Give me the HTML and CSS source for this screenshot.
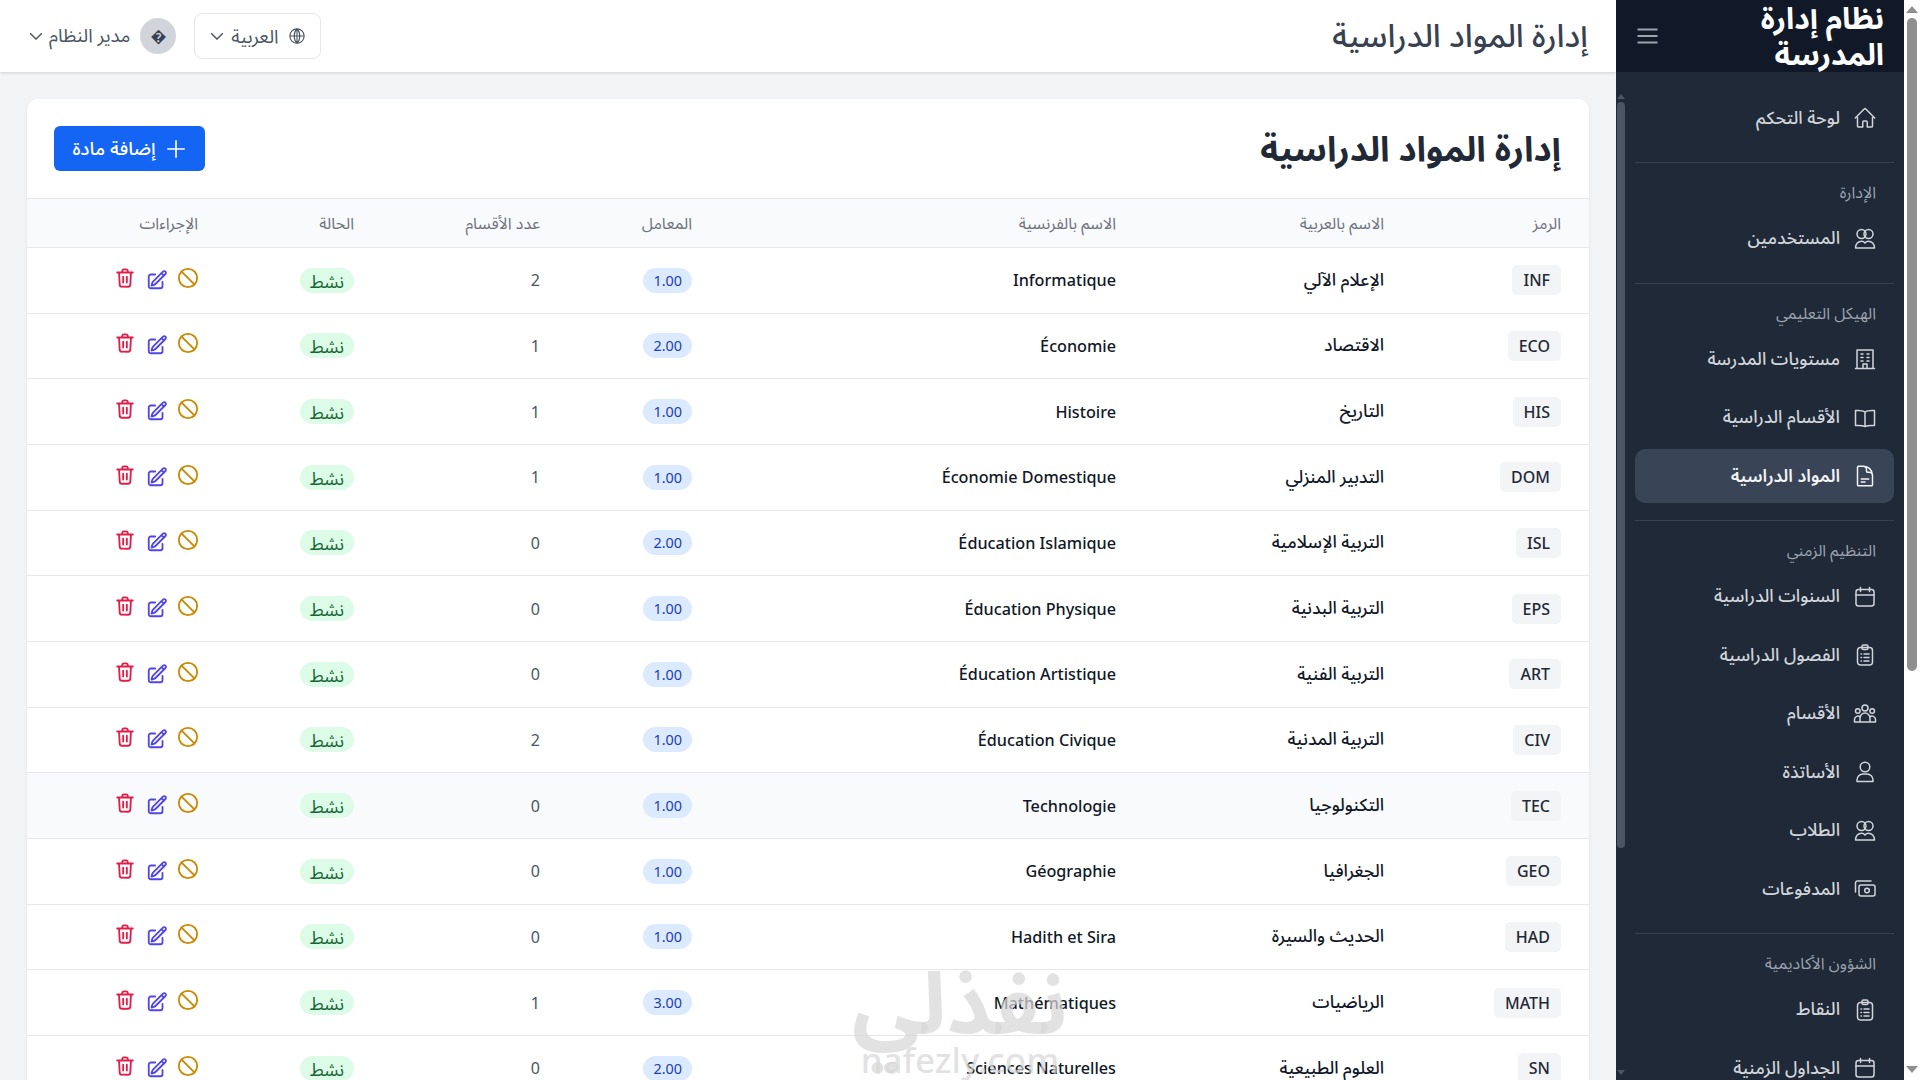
FILE: index.html
```html
<!DOCTYPE html>
<html lang="ar">
<head>
<meta charset="utf-8">
<title>إدارة المواد الدراسية</title>
<link rel="stylesheet" href="styles.css">
</head>
<body>
<svg class="defs" width="0" height="0" aria-hidden="true">
  <symbol id="i-trash" viewBox="0 0 24 24"><path d="M3.500 6h17M9 6V4.500A2 2 0 0 1 11 2.500h2a2 2 0 0 1 2 2V6M5.500 6l.7 13.200A2.500 2.500 0 0 0 8.700 21.500h6.600a2.500 2.500 0 0 0 2.500-2.300L18.500 6M10 10.500v6.500M14 10.500v6.500"/></symbol>
  <symbol id="i-edit" viewBox="0 0 24 24"><path d="m16.862 4.487 1.687-1.688a1.875 1.875 0 1 1 2.652 2.652L10.582 16.070a4.500 4.500 0 0 1-1.897 1.130L6 18l.8-2.685a4.500 4.500 0 0 1 1.130-1.897l8.932-8.931Zm0 0L19.500 7.125M18 14v4.750A2.250 2.250 0 0 1 15.750 21H5.250A2.250 2.250 0 0 1 3 18.750V8.250A2.250 2.250 0 0 1 5.250 6H10"/></symbol>
  <symbol id="i-ban" viewBox="0 0 24 24"><circle cx="12" cy="12" r="10"/><path d="M5 5l14 14"/></symbol>
  <symbol id="i-home" viewBox="0 0 24 24"><path d="m2.250 12 8.954-8.955c.44-.439 1.152-.439 1.591 0L21.750 12M4.500 9.750v10.125c0 .621.504 1.125 1.125 1.125H9.750v-4.875c0-.621.504-1.125 1.125-1.125h2.250c.621 0 1.125.504 1.125 1.125V21h4.125c.621 0 1.125-.504 1.125-1.125V9.750"/></symbol>
  <symbol id="i-users" viewBox="0 0 24 24"><circle cx="8.500" cy="7" r="4.500"/><circle cx="15.500" cy="7" r="4.500"/><path d="M2.500 21c0-4 2.800-6.800 6-6.800 1.700 0 2.800.8 3.500 1.800.7-1 1.800-1.800 3.500-1.800 3.200 0 6 2.800 6 6.800Z"/></symbol>
  <symbol id="i-building" viewBox="0 0 24 24"><path d="M2.500 21.500h19M4 21.500V3h16v18.500M10 21.500V17h4v4.500M8 7h2M14 7h2M8 10.500h2M14 10.500h2M8 14h2M14 14h2"/></symbol>
  <symbol id="i-book" viewBox="0 0 24 24"><path d="M12 6C10 4.500 7 4.200 2.500 4.500v15c4.500-.3 7.500 0 9.500 1 2-1 5-1.300 9.500-1v-15C17 4.200 14 4.500 12 6Zm0 0v14.500"/></symbol>
  <symbol id="i-doc" viewBox="0 0 24 24"><path d="M19.500 14.250v-2.625a3.375 3.375 0 0 0-3.375-3.375h-1.500A1.125 1.125 0 0 1 13.500 7.125v-1.500a3.375 3.375 0 0 0-3.375-3.375H8.250m0 12.750h7.500m-7.500 3H12M10.500 2.250H5.625c-.621 0-1.125.504-1.125 1.125v17.250c0 .621.504 1.125 1.125 1.125h12.750c.621 0 1.125-.504 1.125-1.125V11.250a9 9 0 0 0-9-9Z"/></symbol>
  <symbol id="i-cal" viewBox="0 0 24 24"><rect x="3" y="4.500" width="18" height="16.500" rx="2.500"/><path d="M7.500 2.500v4M16.500 2.500v4M3 10h18"/></symbol>
  <symbol id="i-clip" viewBox="0 0 24 24"><rect x="4.500" y="4.500" width="15" height="17.500" rx="3"/><rect x="9" y="2" width="6" height="4.500" rx="1.500"/><path d="M8 11h.5M11 11h5M8 14.500h.5M11 14.500h5M8 18h.5M11 18h5"/></symbol>
  <symbol id="i-group" viewBox="0 0 24 24"><circle cx="12" cy="6" r="3"/><circle cx="4.800" cy="9" r="2.300"/><circle cx="19.200" cy="9" r="2.300"/><path d="M7 20v-4a5 5 0 0 1 10 0v4ZM7 20H1.500v-2.500a3.300 3.300 0 0 1 5.800-2.200M17 20h5.500v-2.500a3.300 3.300 0 0 0-5.800-2.200"/></symbol>
  <symbol id="i-user" viewBox="0 0 24 24"><circle cx="12" cy="7" r="4.800"/><path d="M4 21.500v-1.500a6 6 0 0 1 6-6h4a6 6 0 0 1 6 6v1.500Z"/></symbol>
  <symbol id="i-money" viewBox="0 0 24 24"><path d="M2.500 15V6a2 2 0 0 1 2-2H18"/><rect x="6" y="8" width="16" height="11" rx="2"/><circle cx="14" cy="13.500" r="2.300"/></symbol>
  <symbol id="i-chev" viewBox="3 7 18 10"><path d="m4.500 8.500 7.500 7.500 7.500-7.500"/></symbol>
  <symbol id="i-globe" viewBox="0 0 24 24"><circle cx="12" cy="12" r="9.500"/><path d="M12 2.500v19M2.500 12h19M12 2.500c-5 5-5 14 0 19M12 2.500c5 5 5 14 0 19"/></symbol>
</svg>

<div class="viewport">
  <div class="app">
    <aside class="sidebar">
      <div class="brand">
        <h1 class="brand-title">نظام إدارة المدرسة</h1>
        <svg class="burger" viewBox="0 0 20 16"><path d="M0 1.500h20M0 8h20M0 14.500h20"/></svg>
      </div>
      <div class="side-body">
        <nav class="nav">
          <a class="item first"><svg class="ico"><use href="#i-home"/></svg><span>لوحة التحكم</span></a>
          <div class="divider"></div>
          <div class="heading">الإدارة</div>
          <a class="item"><svg class="ico"><use href="#i-users"/></svg><span>المستخدمين</span></a>
          <div class="divider"></div>
          <div class="heading">الهيكل التعليمي</div>
          <a class="item"><svg class="ico"><use href="#i-building"/></svg><span>مستويات المدرسة</span></a>
          <a class="item"><svg class="ico"><use href="#i-book"/></svg><span>الأقسام الدراسية</span></a>
          <a class="item active"><svg class="ico"><use href="#i-doc"/></svg><span>المواد الدراسية</span></a>
          <div class="divider"></div>
          <div class="heading">التنظيم الزمني</div>
          <a class="item"><svg class="ico"><use href="#i-cal"/></svg><span>السنوات الدراسية</span></a>
          <a class="item"><svg class="ico"><use href="#i-clip"/></svg><span>الفصول الدراسية</span></a>
          <a class="item"><svg class="ico"><use href="#i-group"/></svg><span>الأقسام</span></a>
          <a class="item"><svg class="ico"><use href="#i-user"/></svg><span>الأساتذة</span></a>
          <a class="item"><svg class="ico"><use href="#i-users"/></svg><span>الطلاب</span></a>
          <a class="item"><svg class="ico"><use href="#i-money"/></svg><span>المدفوعات</span></a>
          <div class="divider"></div>
          <div class="heading">الشؤون الأكاديمية</div>
          <a class="item"><svg class="ico"><use href="#i-clip"/></svg><span>النقاط</span></a>
          <a class="item"><svg class="ico"><use href="#i-cal"/></svg><span>الجداول الزمنية</span></a>
        </nav>
        <div class="side-scroll">
          <i class="arrow-up"></i>
          <i class="side-thumb"></i>
          <i class="arrow-down"></i>
        </div>
      </div>
    </aside>

    <main class="main">
      <header class="topbar">
        <h2 class="top-title">إدارة المواد الدراسية</h2>
        <div class="top-tools">
          <button class="lang"><svg class="globe"><use href="#i-globe"/></svg><span>العربية</span><svg class="chev"><use href="#i-chev"/></svg></button>
          <div class="profile"><span class="avatar">�</span><span>مدير النظام</span><svg class="chev"><use href="#i-chev"/></svg></div>
        </div>
      </header>
      <section class="content">
        <div class="card">
          <div class="card-head">
            <h3 class="card-title">إدارة المواد الدراسية</h3>
            <button class="add"><svg class="plus" viewBox="0 0 20 20"><path d="M10 2v16M2 10h16"/></svg><span>إضافة مادة</span></button>
          </div>
          <table class="table">
            <colgroup><col class="c1"><col class="c2"><col class="c3"><col class="c4"><col class="c5"><col class="c6"><col class="c7"></colgroup>
            <thead><tr><th>الرمز</th><th>الاسم بالعربية</th><th>الاسم بالفرنسية</th><th>المعامل</th><th>عدد الأقسام</th><th>الحالة</th><th>الإجراءات</th></tr></thead>
            <tbody>
              <tr><td><span class="code">INF</span></td><td class="name-ar">الإعلام الآلي</td><td class="name">Informatique</td><td><span class="coef">1.00</span></td><td class="num">2</td><td><span class="status">نشط</span></td><td><div class="acts"><svg class="ban"><use href="#i-ban"/></svg><svg class="edit"><use href="#i-edit"/></svg><svg class="trash"><use href="#i-trash"/></svg></div></td></tr>
              <tr><td><span class="code">ECO</span></td><td class="name-ar">الاقتصاد</td><td class="name">Économie</td><td><span class="coef">2.00</span></td><td class="num">1</td><td><span class="status">نشط</span></td><td><div class="acts"><svg class="ban"><use href="#i-ban"/></svg><svg class="edit"><use href="#i-edit"/></svg><svg class="trash"><use href="#i-trash"/></svg></div></td></tr>
              <tr><td><span class="code">HIS</span></td><td class="name-ar">التاريخ</td><td class="name">Histoire</td><td><span class="coef">1.00</span></td><td class="num">1</td><td><span class="status">نشط</span></td><td><div class="acts"><svg class="ban"><use href="#i-ban"/></svg><svg class="edit"><use href="#i-edit"/></svg><svg class="trash"><use href="#i-trash"/></svg></div></td></tr>
              <tr><td><span class="code">DOM</span></td><td class="name-ar">التدبير المنزلي</td><td class="name">Économie Domestique</td><td><span class="coef">1.00</span></td><td class="num">1</td><td><span class="status">نشط</span></td><td><div class="acts"><svg class="ban"><use href="#i-ban"/></svg><svg class="edit"><use href="#i-edit"/></svg><svg class="trash"><use href="#i-trash"/></svg></div></td></tr>
              <tr><td><span class="code">ISL</span></td><td class="name-ar">التربية الإسلامية</td><td class="name">Éducation Islamique</td><td><span class="coef">2.00</span></td><td class="num">0</td><td><span class="status">نشط</span></td><td><div class="acts"><svg class="ban"><use href="#i-ban"/></svg><svg class="edit"><use href="#i-edit"/></svg><svg class="trash"><use href="#i-trash"/></svg></div></td></tr>
              <tr><td><span class="code">EPS</span></td><td class="name-ar">التربية البدنية</td><td class="name">Éducation Physique</td><td><span class="coef">1.00</span></td><td class="num">0</td><td><span class="status">نشط</span></td><td><div class="acts"><svg class="ban"><use href="#i-ban"/></svg><svg class="edit"><use href="#i-edit"/></svg><svg class="trash"><use href="#i-trash"/></svg></div></td></tr>
              <tr><td><span class="code">ART</span></td><td class="name-ar">التربية الفنية</td><td class="name">Éducation Artistique</td><td><span class="coef">1.00</span></td><td class="num">0</td><td><span class="status">نشط</span></td><td><div class="acts"><svg class="ban"><use href="#i-ban"/></svg><svg class="edit"><use href="#i-edit"/></svg><svg class="trash"><use href="#i-trash"/></svg></div></td></tr>
              <tr><td><span class="code">CIV</span></td><td class="name-ar">التربية المدنية</td><td class="name">Éducation Civique</td><td><span class="coef">1.00</span></td><td class="num">2</td><td><span class="status">نشط</span></td><td><div class="acts"><svg class="ban"><use href="#i-ban"/></svg><svg class="edit"><use href="#i-edit"/></svg><svg class="trash"><use href="#i-trash"/></svg></div></td></tr>
              <tr class="hover"><td><span class="code">TEC</span></td><td class="name-ar">التكنولوجيا</td><td class="name">Technologie</td><td><span class="coef">1.00</span></td><td class="num">0</td><td><span class="status">نشط</span></td><td><div class="acts"><svg class="ban"><use href="#i-ban"/></svg><svg class="edit"><use href="#i-edit"/></svg><svg class="trash"><use href="#i-trash"/></svg></div></td></tr>
              <tr><td><span class="code">GEO</span></td><td class="name-ar">الجغرافيا</td><td class="name">Géographie</td><td><span class="coef">1.00</span></td><td class="num">0</td><td><span class="status">نشط</span></td><td><div class="acts"><svg class="ban"><use href="#i-ban"/></svg><svg class="edit"><use href="#i-edit"/></svg><svg class="trash"><use href="#i-trash"/></svg></div></td></tr>
              <tr><td><span class="code">HAD</span></td><td class="name-ar">الحديث والسيرة</td><td class="name">Hadith et Sira</td><td><span class="coef">1.00</span></td><td class="num">0</td><td><span class="status">نشط</span></td><td><div class="acts"><svg class="ban"><use href="#i-ban"/></svg><svg class="edit"><use href="#i-edit"/></svg><svg class="trash"><use href="#i-trash"/></svg></div></td></tr>
              <tr><td><span class="code">MATH</span></td><td class="name-ar">الرياضيات</td><td class="name">Mathématiques</td><td><span class="coef">3.00</span></td><td class="num">1</td><td><span class="status">نشط</span></td><td><div class="acts"><svg class="ban"><use href="#i-ban"/></svg><svg class="edit"><use href="#i-edit"/></svg><svg class="trash"><use href="#i-trash"/></svg></div></td></tr>
              <tr><td><span class="code">SN</span></td><td class="name-ar">العلوم الطبيعية</td><td class="name">Sciences Naturelles</td><td><span class="coef">2.00</span></td><td class="num">0</td><td><span class="status">نشط</span></td><td><div class="acts"><svg class="ban"><use href="#i-ban"/></svg><svg class="edit"><use href="#i-edit"/></svg><svg class="trash"><use href="#i-trash"/></svg></div></td></tr>
            </tbody>
          </table>
        </div>
      </section>
      <div class="watermark"><div class="wm-ar">نفذلي</div><div class="wm-en">nafezly.com</div></div>
    </main>
  </div>
  <div class="page-scroll">
    <i class="arrow-up"></i>
    <i class="page-thumb"></i>
    <i class="arrow-down"></i>
  </div>
</div>
</body>
</html>
```
FILE: styles.css
```css
* { box-sizing: border-box; }
html, body { margin: 0; height: 100%; overflow: hidden; }
body { font-family: "Noto Sans", "Noto Sans Arabic", "DejaVu Sans", sans-serif; background: #f3f4f6; color: #1f2937; }
.defs { position: absolute; }
h1, h2, h3 { margin: 0; }

.viewport { display: flex; height: 1080px; }
.app { flex: 1; display: flex; direction: rtl; min-width: 0; }

.page-scroll { width: 16px; background: #fff; display: flex; flex-direction: column; align-items: center; padding: 6px 0 7px; }
.page-thumb { width: 10px; height: 653px; margin-top: 5px; border-radius: 5px; background: #8f8f8f; }
.page-scroll .arrow-up { border-bottom-color: #8f8f8f; border-width: 0 6px 7px; }
.page-scroll .arrow-down { border-top-color: #8f8f8f; border-width: 7px 6px 0; margin-top: auto; }

.sidebar { width: 288px; flex: none; background: #1f2937; display: flex; flex-direction: column; height: 1080px; overflow: hidden; }
.brand { height: 72px; flex: none; background: #111827; display: flex; align-items: center; justify-content: space-between; padding: 0 20px 0 21px; }
.brand-title { font-size: 30px; line-height: 36px; font-weight: 700; color: #fff; width: 210px; }
.burger { width: 21px; height: 16px; fill: none; stroke: #9ca3af; stroke-width: 2; }

.side-body { flex: 1; display: flex; min-height: 0; }
.nav { flex: 1; padding: 19px 10px 0 9px; min-width: 0; }
.side-scroll { width: 10px; flex: none; display: flex; flex-direction: column; align-items: center; padding: 22px 0 5px; }
.side-thumb { width: 8px; height: 746px; margin-top: 3px; border-radius: 4px; background: #4b5563; }
.side-scroll .arrow-up { border-bottom-color: #4b5563; border-width: 0 4px 5px; }
.side-scroll .arrow-down { border-top-color: #4b5563; border-width: 5px 4px 0; margin-top: auto; }
.arrow-up, .arrow-down { display: block; width: 0; height: 0; border-style: solid; border-color: transparent; flex: none; }

.item { display: flex; align-items: center; gap: 13px; height: 54px; margin-bottom: 4.500px; padding: 0 17px 0 10px; border-radius: 10px; color: #d1d5db; font-size: 17.600px; font-weight: 500; }
.item.active { background: #394457; color: #f3f4f6; font-weight: 600; }
.ico { width: 24px; height: 24px; flex: none; fill: none; stroke: currentColor; stroke-width: 1.500; stroke-linecap: round; stroke-linejoin: round; }
.divider { height: 1px; background: #374151; margin: 17px 0 0; }
.heading { height: 48.500px; padding: 19px 18px 0 0; font-size: 16px; line-height: 20px; color: #9ca3af; }

.main { flex: 1; min-width: 0; position: relative; display: flex; flex-direction: column; overflow: hidden; }
.topbar { height: 72px; flex: none; background: #fff; box-shadow: 0 1px 3px rgba(0,0,0,.15); display: flex; align-items: center; justify-content: space-between; padding: 0 28px 0 29px; position: relative; z-index: 1; }
.top-title { font-size: 32px; font-weight: 500; color: #374151; padding-top: 2px; }
.top-tools { display: flex; align-items: center; gap: 18px; color: #4b5563; font-size: 18.800px; }
.lang { width: 127px; height: 46px; background: #fff; border: 1px solid #e5e7eb; border-radius: 8px; display: flex; align-items: center; gap: 10px; padding: 2px 14px 0; font: inherit; color: inherit; }
.lang .chev { margin-inline-start: -3px; margin-top: -2px; }
.lang .globe { margin-top: -2px; }
.globe { width: 18px; height: 18px; flex: none; fill: none; stroke: currentColor; stroke-width: 1.500; }
.chev { width: 14px; height: 8px; flex: none; fill: none; stroke: currentColor; stroke-width: 1.800; }
.profile { display: flex; align-items: center; gap: 10px; }
.profile .chev { margin-inline-start: -4px; }
.avatar { width: 36px; height: 36px; border-radius: 50%; background: #d1d5db; display: flex; align-items: center; justify-content: center; font-size: 16px; color: #374151; }

.content { flex: 1; padding: 27px 27px 0 27px; min-height: 0; }
.card { background: #fff; border-radius: 10px 10px 0 0; box-shadow: 0 1px 3px rgba(0,0,0,.1); }
.card-head { height: 99px; display: flex; align-items: center; justify-content: space-between; padding: 0 28px 0 27px; }
.card-title { font-size: 34.800px; font-weight: 700; color: #1f2937; padding-top: 2px; }
.add { width: 151px; height: 45px; border: 0; border-radius: 6px; background: #1565f5; color: #fff; display: flex; align-items: center; justify-content: center; gap: 9px; font: inherit; font-size: 18.700px; font-weight: 500; }
.plus { width: 22px; height: 22px; fill: none; stroke: #fff; stroke-width: 1.500; }

.table { width: 1562px; table-layout: fixed; border-collapse: collapse; text-align: right; }
.c1 { width: 177px; } .c2 { width: 268px; } .c3 { width: 424px; } .c4 { width: 152px; } .c5 { width: 186px; } .c6 { width: 156px; } .c7 { width: 199px; }
.table th { height: 49px; padding: 2px 28px 0 0; background: #f9fafb; border-top: 1px solid #e5e7eb; border-bottom: 1px solid #e5e7eb; font-size: 16px; font-weight: 400; color: #6b7280; }
.table td { height: 65.670px; padding: 0 28px 0 0; border-bottom: 1px solid #e5e7eb; font-size: 16px; color: #111827; }
.table tr.hover td { background: #f9fafb; }
.table td.name { font-size: 16.200px; font-weight: 500; }
.table td.name-ar { font-size: 17.400px; font-weight: 500; }
.table td.num { color: #4b5563; }
.code { display: inline-block; padding: 3px 11px; border-radius: 5px; background: #f3f4f6; font-weight: 500; font-size: 16px; line-height: 24px; color: #1f2937; }
.coef { display: inline-block; padding: 0 10px; border-radius: 13px; background: #dbeafe; color: #1e40af; font-size: 14.400px; line-height: 25px; }
.status { display: inline-block; padding: 1px 10px 0; height: 25px; border-radius: 13px; background: #dcfce7; color: #166534; font-size: 17.600px; line-height: 25px; }
.acts { display: flex; gap: 9.500px; align-items: center; margin-top: -5px; margin-inline-start: -1px; }
.acts svg { width: 22px; height: 22px; flex: none; fill: none; stroke-width: 2; stroke-linecap: round; stroke-linejoin: round; }
.ban { stroke: #ca8a04; }
.acts .edit { stroke: #4f46e5; margin-top: 4px; }
.trash { stroke: #e11d48; }

.watermark { position: absolute; left: 843px; top: 957px; width: 234px; direction: ltr; text-align: center; color: rgba(215,215,215,.72); pointer-events: none; }
.wm-ar { font-size: 86px; line-height: 88px; font-weight: 700; }
.wm-en { font-size: 35px; line-height: 30px; font-weight: 500; }
```
